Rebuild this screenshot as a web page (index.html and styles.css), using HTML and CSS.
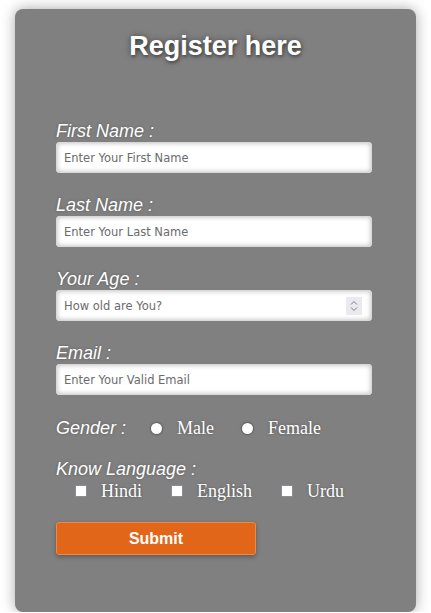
FILE: index.html
```html
<!DOCTYPE html>
<html>
<head>
<meta charset="utf-8">
<link rel="stylesheet" href="styles.css">
</head>
<body>
<div class="card">
  <h1 class="title">Register here</h1>
  <form class="form">
    <div class="group">
      <label class="label">First Name :</label>
      <div class="box"><input class="input" type="text" placeholder="Enter Your First Name"></div>
    </div>
    <div class="group">
      <label class="label">Last Name :</label>
      <div class="box"><input class="input" type="text" placeholder="Enter Your Last Name"></div>
    </div>
    <div class="group">
      <label class="label">Your Age :</label>
      <div class="box"><input class="input" type="text" placeholder="How old are You?">
        <span class="spin"><svg width="16" height="18" viewBox="0 0 16 18"><path d="M5 7.5 L8 4.5 L11 7.5" fill="none" stroke="#7a7a80" stroke-width="1"/><path d="M5 10.5 L8 13.5 L11 10.5" fill="none" stroke="#7a7a80" stroke-width="1"/></svg></span>
      </div>
    </div>
    <div class="group">
      <label class="label">Email :</label>
      <div class="box"><input class="input" type="text" placeholder="Enter Your Valid Email"></div>
    </div>
    <div class="gender">
      <span class="label gl">Gender :</span>
      <span class="opt"><span class="radio"></span><span class="otext">Male</span></span>
      <span class="opt"><span class="radio"></span><span class="otext">Female</span></span>
    </div>
    <div class="lang">
      <span class="label">Know Language :</span>
      <div class="checks">
        <span class="opt"><span class="check"></span><span class="otext">Hindi</span></span>
        <span class="opt"><span class="check"></span><span class="otext">English</span></span>
        <span class="opt"><span class="check"></span><span class="otext">Urdu</span></span>
      </div>
    </div>
    <button class="submit" type="button">Submit</button>
  </form>
</div>
</body>
</html>
```
FILE: styles.css
```css
html, body { margin: 0; padding: 0; background: #fff; }
body { padding: 9px 15px 0 15px; }
.card {
  width: 401px;
  height: 603px;
  box-sizing: border-box;
  background: #808080;
  border-radius: 8px;
  box-shadow: 0 0 14px rgba(0,0,0,0.35);
  padding: 22px 0 0 41px;
}
.title {
  margin: 0 0 0 -41px;
  text-align: center;
  font-family: "Liberation Sans", Arial, sans-serif;
  font-weight: bold;
  font-size: 27px;
  line-height: 30px;
  color: #fff;
  text-shadow: 0 0 6px rgba(0,0,0,0.45), 1px 2px 3px rgba(0,0,0,0.3);
}
.form { margin-top: 60px; display: flex; flex-direction: column; }
.group { display: flex; flex-direction: column; margin-bottom: 22px; }
.label {
  font-family: "Liberation Sans", Arial, sans-serif;
  font-style: italic;
  font-size: 18px;
  line-height: 20px;
  color: #fff;
  text-shadow: 0 0 3px rgba(0,0,0,0.3);
  margin-bottom: 1px;
  padding-top: 1px;
  margin-top: -1px;
}
.box {
  width: 316px;
  height: 31px;
  box-sizing: border-box;
  background: #fff;
  border: 1px solid #d8d8d8;
  border-radius: 3px;
  box-shadow: inset 0 0 5px rgba(0,0,0,0.28);
  display: flex;
  align-items: center;
  padding: 1px 9px 0 7px;
}
.input {
  flex: 1;
  border: none;
  outline: none;
  background: transparent;
  padding: 0;
  font-family: "DejaVu Sans", Verdana, sans-serif;
  font-size: 11.5px;
  color: #333;
}
.input::placeholder { color: #6b6b6b; }
.spin {
  width: 16px;
  height: 18px;
  margin-top: -1px;
  background: #e9e9ee;
  display: flex;
}
.gender { display: flex; align-items: center; height: 22px; }
.gender .gl { margin: 0 25px 0 0; padding: 0; }
.opt { display: inline-flex; align-items: center; }
.gender .opt { margin-right: 28px; }
.radio {
  width: 11px; height: 11px;
  border-radius: 50%;
  background: #fff;
  box-shadow: 0 0 0 1px rgba(90,90,100,0.5), 0 0 3px rgba(0,0,0,0.4);
  margin-right: 15px;
}
.otext {
  font-family: "Liberation Serif", "Times New Roman", serif;
  font-size: 18px;
  line-height: 22px;
  color: #fff;
  text-shadow: 0 0 3px rgba(0,0,0,0.35);
}
.lang { display: flex; flex-direction: column; margin-top: 20px; }
.lang .label { padding: 0; margin-top: 0; }
.checks { display: flex; align-items: center; height: 20px; padding-left: 19px; margin-top: 1px; }
.check {
  width: 10px; height: 10px;
  background: #fff;
  border: 1px solid #8a8a98;
  margin-right: 14px;
}
.checks .opt { margin-right: 29px; }
.submit {
  margin-top: 21px;
  width: 200px;
  height: 33px;
  background: #e2661a;
  border: 1px solid #ee8a45;
  border-radius: 3px;
  box-shadow: 0 2px 4px rgba(0,0,0,0.3);
  color: #fff;
  font-family: "Liberation Sans", Arial, sans-serif;
  font-weight: bold;
  font-size: 16px;
  padding: 0;
}
```
